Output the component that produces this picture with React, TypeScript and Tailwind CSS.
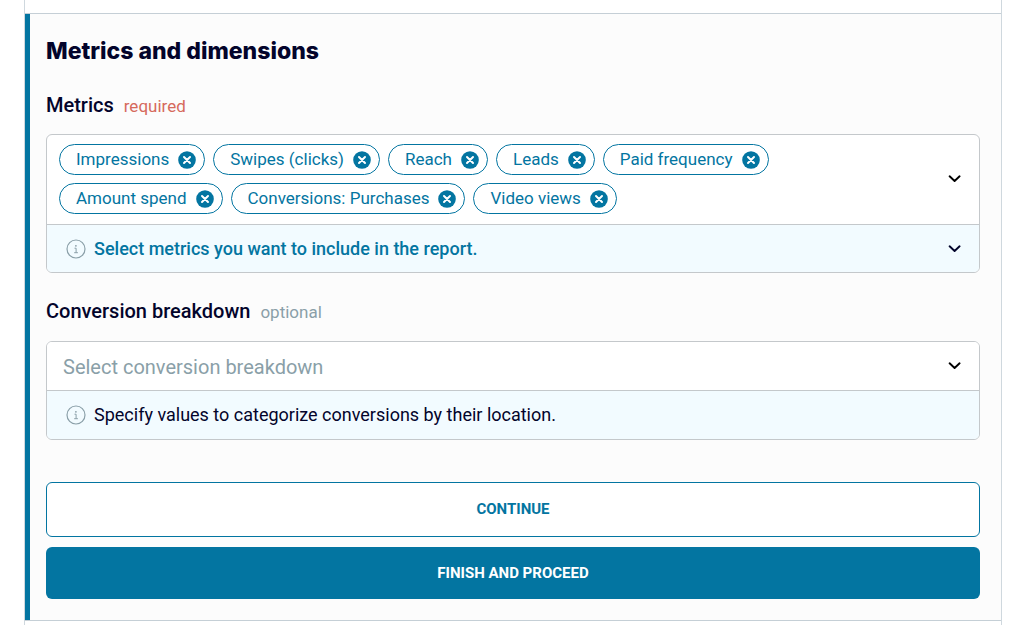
import React, { useState } from "react";

const METRICS = [
  "Impressions",
  "Swipes (clicks)",
  "Reach",
  "Leads",
  "Paid frequency",
  "Amount spend",
  "Conversions: Purchases",
  "Video views",
];

const Chevron = ({ className = "" }: { className?: string }) => (
  <svg
    viewBox="0 0 14 8"
    className={`w-[14px] h-2 ${className}`}
    fill="none"
    stroke="currentColor"
    strokeWidth="1.9"
    strokeLinecap="round"
    strokeLinejoin="round"
    aria-hidden="true"
  >
    <path d="M1.6 1.3 6.6 6 11.6 1.3" />
  </svg>
);

const InfoIcon = () => (
  <svg viewBox="0 0 20 20" className="size-5 shrink-0 text-[#8a9fa8]" fill="none" aria-hidden="true">
    <circle cx="10" cy="10" r="9" stroke="currentColor" strokeWidth="1.2" />
    <circle cx="9.9" cy="6.8" r="0.9" fill="currentColor" />
    <path d="M8.5 9.2h1.6v4.4M8.2 13.7h3.7" stroke="currentColor" strokeWidth="1" />
  </svg>
);

interface ChipProps {
  label: string;
  onRemove: () => void;
}

const Chip: React.FC<ChipProps> = ({ label, onRemove }) => (
  <li className="flex items-center gap-[9px] h-[31px] pl-4 pr-2 rounded-full border border-[#0375a1] bg-white text-[17px] text-[#0375a1]">
    <span>{label}</span>
    <button type="button" onClick={onRemove} aria-label={`Remove ${label}`}>
      <svg viewBox="0 0 18 18" className="size-[18px]" aria-hidden="true">
        <circle cx="9" cy="9" r="8.8" fill="#0375a1" />
        <path d="m6 6 6 6M12 6l-6 6" stroke="#fff" strokeWidth="2" strokeLinecap="round" />
      </svg>
    </button>
  </li>
);

export default function App() {
  const [metrics, setMetrics] = useState(METRICS);
  const [breakdown, setBreakdown] = useState("");

  const removeMetric = (name: string) => {
    setMetrics(metrics.filter((m) => m !== name));
  };

  return (
    <div className="min-h-screen bg-white font-['Roboto','Liberation_Sans',sans-serif] text-[#03042b]">
      <main className="flex flex-col min-h-screen ml-6 mr-[22px] border-x border-[#cfd8de]">
        <div className="h-[13px]" />
        <section className="border-y border-[#c5cfd6] bg-[#fcfcfc]">
          <form
            className="border-l-5 border-[#0375a1] pl-4 pr-[21px] py-[21px]"
            onSubmit={(e) => e.preventDefault()}
          >
            <h2 className="font-['Inter',sans-serif] text-[23px] leading-8 font-extrabold">
              Metrics and dimensions
            </h2>

            <div className="flex items-baseline gap-[10px] h-7 mt-6">
              <h3 id="metrics-label" className="text-xl leading-7 font-medium">
                Metrics
              </h3>
              <span className="text-[17px] leading-7 text-[#d66a5c]">required</span>
            </div>
            <div className="mt-[15px] rounded-md border border-[#c4c8cb] bg-white overflow-hidden">
              <div className="flex items-center pl-3 pr-[17px] pt-[9px] pb-[10px]">
                <ul aria-labelledby="metrics-label" className="flex flex-1 flex-wrap gap-2 pr-36">
                  {metrics.map((m) => (
                    <Chip key={m} label={m} onRemove={() => removeMetric(m)} />
                  ))}
                </ul>
                <button type="button" aria-label="Open metrics list" className="text-black">
                  <Chevron />
                </button>
              </div>
              <button
                type="button"
                className="flex items-center gap-2 w-full h-12 pl-[19px] pr-[17px] border-t border-[#c4c8cb] bg-[#f2fbff] text-left text-lg font-medium text-[#0375a1]"
              >
                <InfoIcon />
                <span className="flex-1">Select metrics you want to include in the report.</span>
                <Chevron className="text-[#03042b]" />
              </button>
            </div>

            <div className="flex items-baseline gap-[10px] h-7 mt-6">
              <label htmlFor="breakdown" className="text-xl leading-7 font-medium">
                Conversion breakdown
              </label>
              <span className="text-[17px] leading-7 text-[#8a9fa8]">optional</span>
            </div>
            <div className="mt-4 rounded-md border border-[#c4c8cb] bg-white overflow-hidden">
              <div className="relative">
                <select
                  id="breakdown"
                  value={breakdown}
                  onChange={(e) => setBreakdown(e.target.value)}
                  className="block appearance-none w-full h-12 pl-4 pr-10 pt-[2px] bg-white text-xl text-[#8a9fa8]"
                >
                  <option value="">Select conversion breakdown</option>
                </select>
                <Chevron className="absolute right-[17px] top-5 text-black pointer-events-none" />
              </div>
              <div className="flex items-center gap-2 h-[49px] pl-[19px] pr-[17px] border-t border-[#c4c8cb] bg-[#f2fbff] text-lg">
                <InfoIcon />
                <p>Specify values to categorize conversions by their location.</p>
              </div>
            </div>

            <div className="flex flex-col gap-[10px] mt-[42px]">
              <button
                type="button"
                className="h-[55px] rounded-md border border-[#0375a1] bg-white text-[15px] font-bold text-[#0375a1]"
              >
                CONTINUE
              </button>
              <button
                type="submit"
                className="h-[52px] rounded-md bg-[#0375a1] text-[15px] font-bold text-white"
              >
                FINISH AND PROCEED
              </button>
            </div>
          </form>
        </section>
      </main>
    </div>
  );
}
